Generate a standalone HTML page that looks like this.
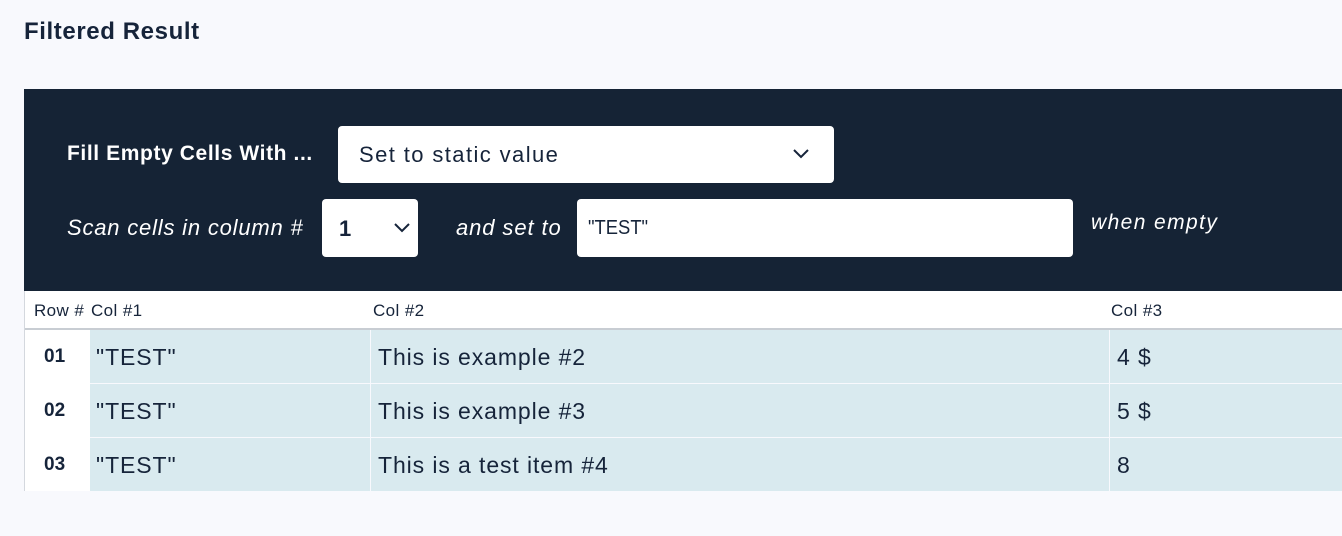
<!DOCTYPE html>
<html><head><style>
*{margin:0;padding:0;box-sizing:border-box}
body{width:1342px;height:536px;background:#f8f9fd;font-family:"Liberation Sans",sans-serif;color:#16243a;position:relative;overflow:hidden}
.a{position:absolute;white-space:nowrap}
.box{position:absolute;background:#fff;border-radius:4px}
.cell{position:absolute;background:#d9eaef}
.t{font-size:23px;letter-spacing:0.9px}
.h{font-size:17px;letter-spacing:0.4px}
</style></head><body>
<div class="a" style="left:24px;top:18px;font-size:24px;font-weight:bold;color:#16243a;letter-spacing:0.6px">Filtered Result</div>
<div class="a" style="left:24px;top:89px;width:1318px;height:202px;background:#152335"></div>
<div class="a" style="left:67px;top:142px;font-size:21px;font-weight:bold;color:#fff;letter-spacing:0.6px">Fill Empty Cells With ...</div>
<div class="box" style="left:338px;top:126px;width:496px;height:57px"></div>
<div class="a" style="left:359px;top:142px;font-size:22px;color:#16243a;letter-spacing:1.4px">Set to static value</div>
<svg class="a" style="left:792px;top:147px" width="18" height="12" viewBox="0 0 18 12"><path d="M2 3l7 7 7-7" fill="none" stroke="#16243a" stroke-width="2"/></svg>
<div class="a" style="left:67px;top:215px;font-size:22px;font-style:italic;color:#fff;letter-spacing:0.8px">Scan cells in column #</div>
<div class="box" style="left:322px;top:199px;width:96px;height:58px"></div>
<div class="a" style="left:339px;top:216px;font-size:22px;font-weight:bold;color:#16243a">1</div>
<svg class="a" style="left:393px;top:221px" width="18" height="12" viewBox="0 0 18 12"><path d="M2 3l7 7 7-7" fill="none" stroke="#16243a" stroke-width="2"/></svg>
<div class="a" style="left:456px;top:215px;font-size:22px;font-style:italic;color:#fff;letter-spacing:0.9px">and set to</div>
<div class="box" style="left:577px;top:199px;width:496px;height:58px"></div>
<div class="a" style="left:588px;top:217px;font-size:20px;color:#16243a;transform:scaleX(.92);transform-origin:left">"TEST"</div>
<div class="a" style="left:1091px;top:211px;font-size:21px;font-style:italic;color:#fff;letter-spacing:1.4px">when empty</div>
<div class="a" style="left:24px;top:291px;width:1318px;height:39px;background:#fff;border-bottom:2px solid #c8cdd3"></div>
<div class="a" style="left:24px;top:291px;width:1px;height:200px;background:#d4d8de"></div>
<div class="a h" style="left:34px;top:301px">Row #</div>
<div class="a h" style="left:91px;top:301px">Col #1</div>
<div class="a h" style="left:373px;top:301px">Col #2</div>
<div class="a h" style="left:1111px;top:301px">Col #3</div>
<div class="a" style="left:25px;top:330px;width:65px;height:161px;background:#fff"></div>
<div class="cell" style="left:90px;top:330px;width:280px;height:53px"></div>
<div class="cell" style="left:371px;top:330px;width:738px;height:53px"></div>
<div class="cell" style="left:1110px;top:330px;width:232px;height:53px"></div>
<div class="cell" style="left:90px;top:384px;width:280px;height:53px"></div>
<div class="cell" style="left:371px;top:384px;width:738px;height:53px"></div>
<div class="cell" style="left:1110px;top:384px;width:232px;height:53px"></div>
<div class="cell" style="left:90px;top:438px;width:280px;height:53px"></div>
<div class="cell" style="left:371px;top:438px;width:738px;height:53px"></div>
<div class="cell" style="left:1110px;top:438px;width:232px;height:53px"></div>
<div class="a" style="left:44px;top:346px;font-size:19px;font-weight:bold">01</div>
<div class="a" style="left:44px;top:400px;font-size:19px;font-weight:bold">02</div>
<div class="a" style="left:44px;top:454px;font-size:19px;font-weight:bold">03</div>
<div class="a t" style="left:96px;top:344px">"TEST"</div>
<div class="a t" style="left:96px;top:398px">"TEST"</div>
<div class="a t" style="left:96px;top:452px">"TEST"</div>
<div class="a t" style="left:378px;top:344px">This is example #2</div>
<div class="a t" style="left:378px;top:398px">This is example #3</div>
<div class="a t" style="left:378px;top:452px">This is a test item #4</div>
<div class="a t" style="left:1117px;top:344px">4 $</div>
<div class="a t" style="left:1117px;top:398px">5 $</div>
<div class="a t" style="left:1117px;top:452px">8</div>
</body></html>
